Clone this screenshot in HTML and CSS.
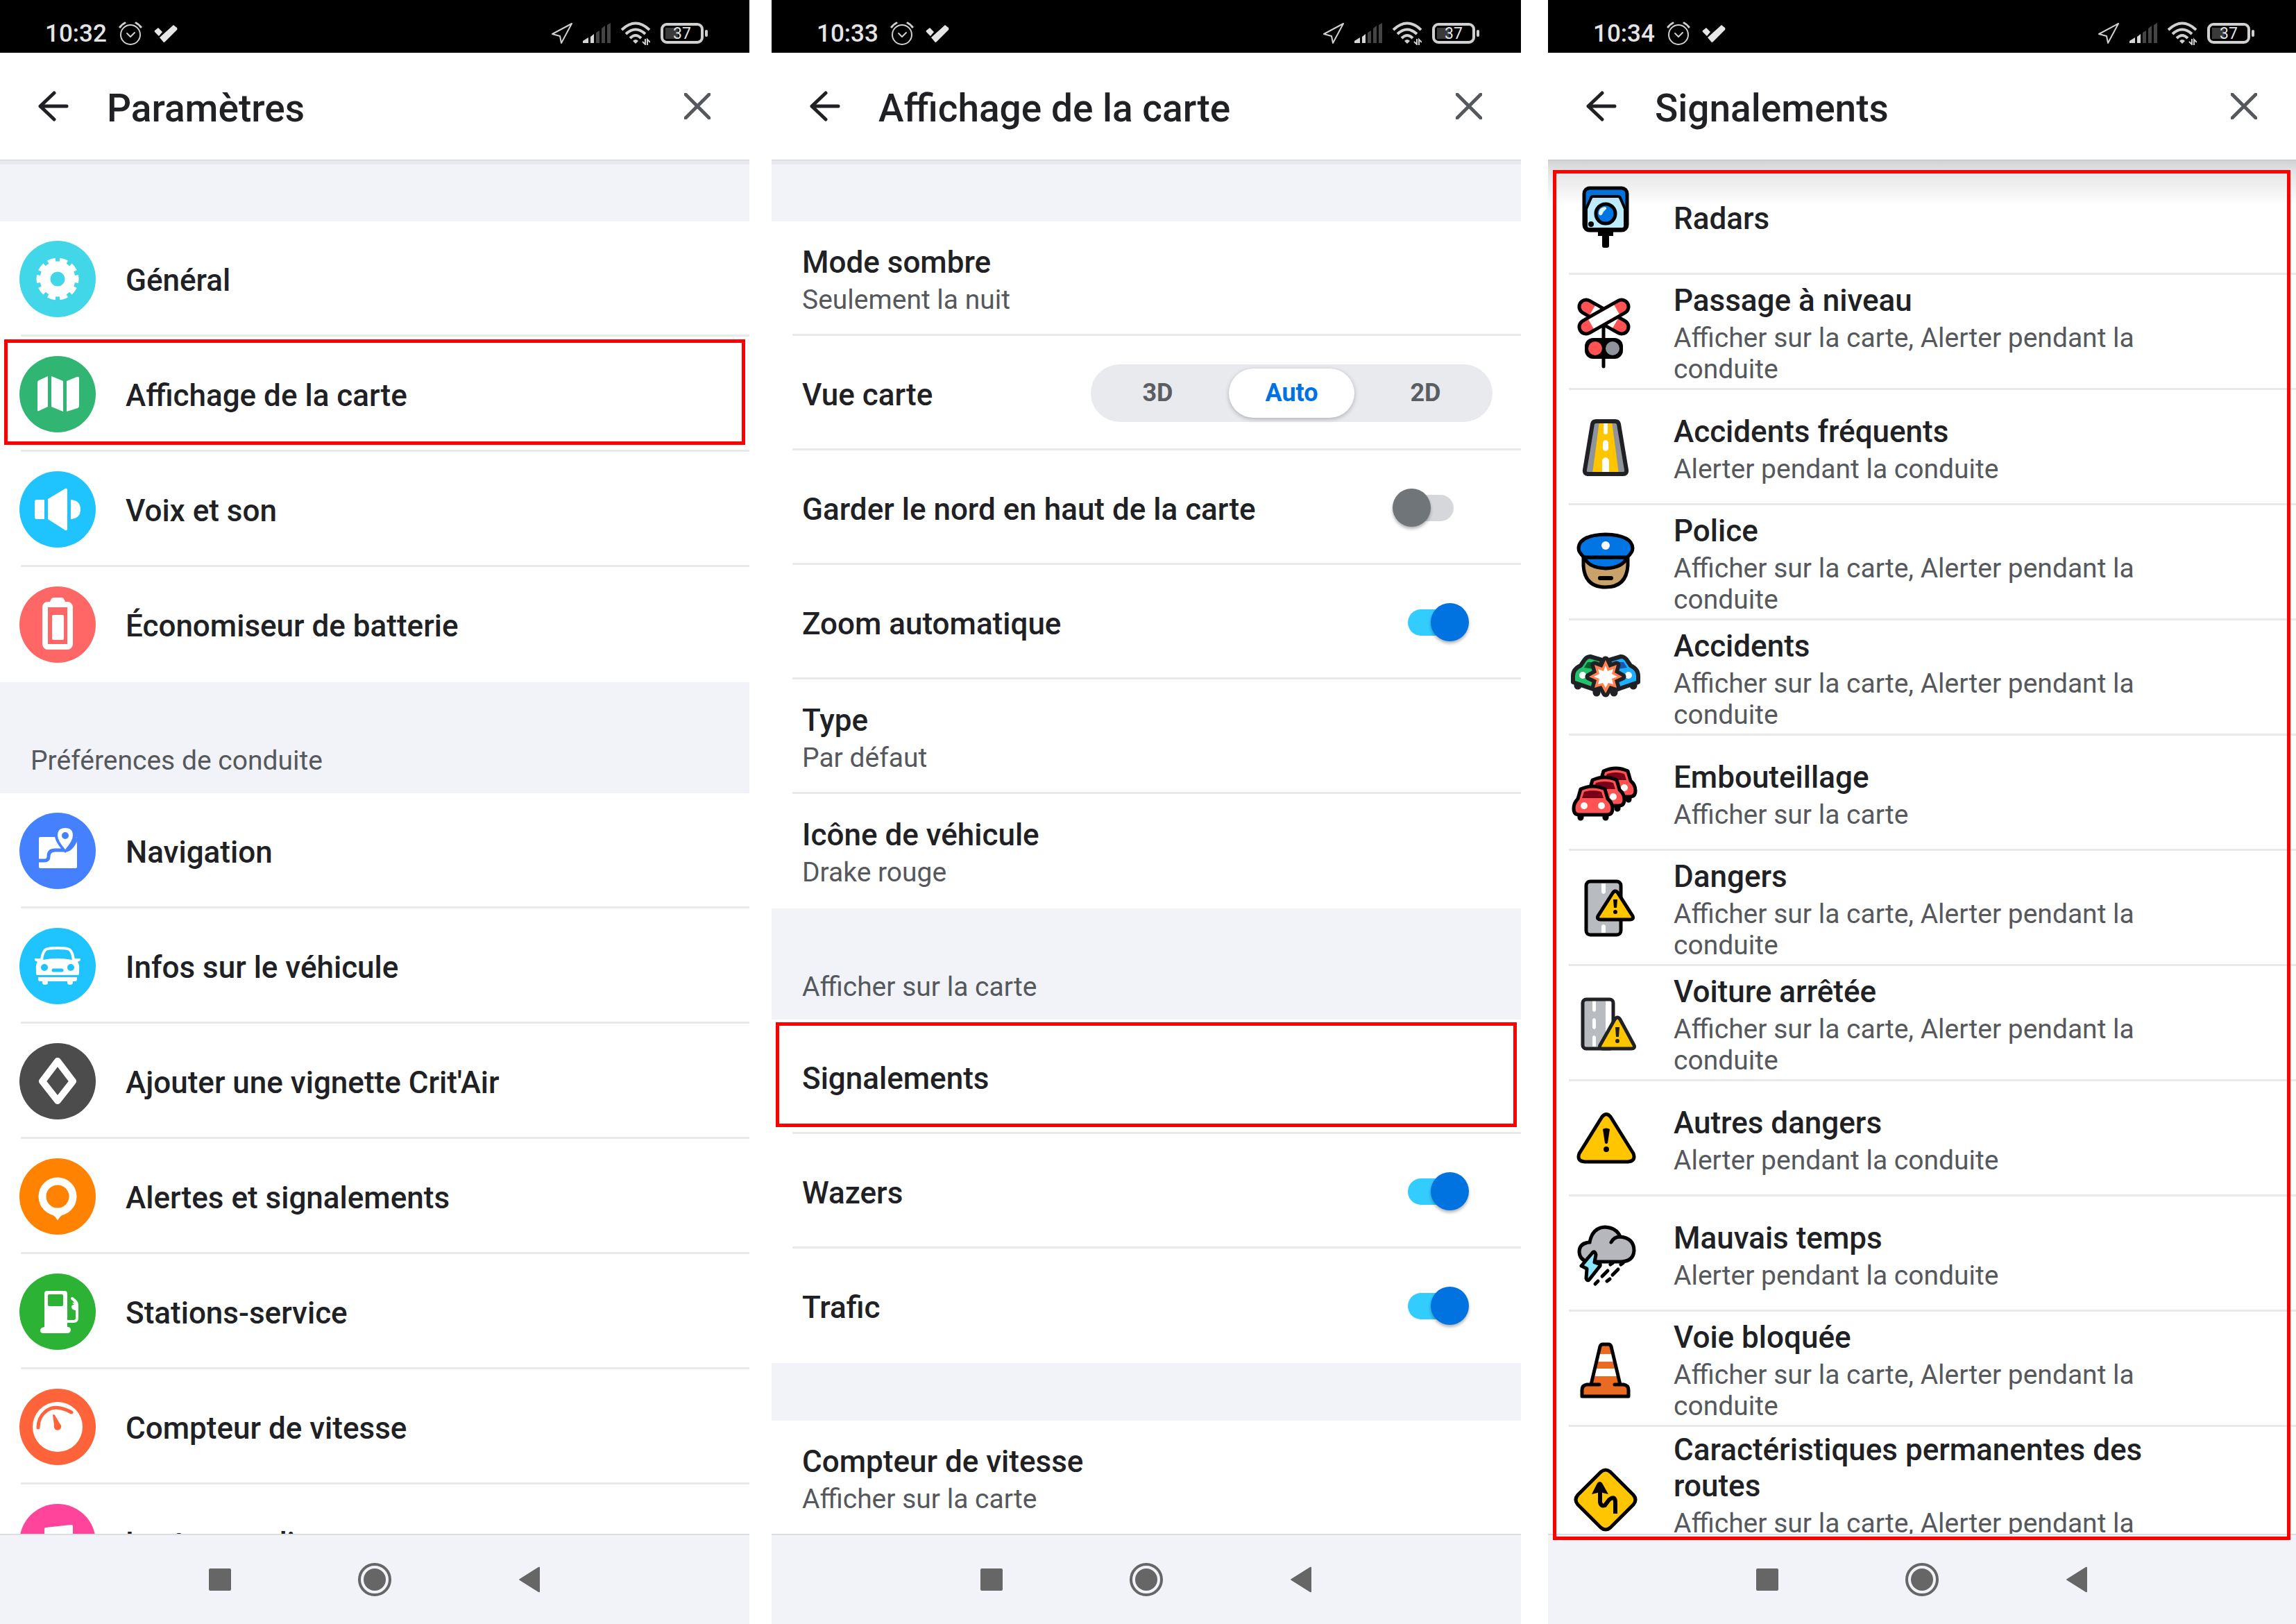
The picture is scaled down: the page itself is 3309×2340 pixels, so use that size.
FILE: index.html
```html
<!DOCTYPE html>
<html lang="fr">
<head>
    <meta charset="UTF-8">
    <meta name="viewport" content="width=device-width, initial-scale=1.0">
    <title>Paramètres des signalements</title>
    <link rel="stylesheet" href="styles.css">
</head>
<body>
    <!-- shared icons -->
    <svg class="sprite" aria-hidden="true">
        <symbol id="alarm" viewBox="0 0 34 34">
            <g fill="none" stroke="#d0d0d0" stroke-width="2" stroke-linecap="round" stroke-linejoin="round">
                <circle cx="17" cy="19" r="14"/>
                <path d="M12 17l5 5 6-6"/>
                <path d="M2 8q3-4 7-6M25 2q4 2 7 6" stroke-width="3"/>
            </g>
        </symbol>
        <symbol id="check" viewBox="0 0 34 34">
            <path d="M6 9l6 6-5 6-6-6q-1-1 0-2zM28 5l5 4q1 2 0 3L16 29q-2 2-3 0l-5-6z" fill="#e6e6e6"/>
        </symbol>
        <symbol id="location" viewBox="0 0 31 34">
            <path d="M30 3L2 18l11 3 2 10z" fill="none" stroke="#d0d0d0" stroke-width="2" stroke-linejoin="round"/>
        </symbol>
        <symbol id="signal" viewBox="0 0 40 34">
            <path d="M0 31v-3l8-5v8zM11 31v-9l5-4v13z" fill="#d6d6d6"/>
            <path d="M19 31V16l5-3v18zM27 31V10l5-4v25zM35 31V5l5-3v29z" fill="#444"/>
        </symbol>
        <symbol id="wifi" viewBox="0 0 42 34">
            <g fill="none" stroke="#d0d0d0" stroke-width="4">
                <path d="M1 12q20-19 40 0M7 18q14-13 28 0M13 24q8-8 16 0"/>
            </g>
            <path d="M17 28q4-4 8 0l-4 4z" fill="#d0d0d0"/>
            <path d="M35 25v8l-4-4M38 34v-8l4 4" fill="none" stroke="#d0d0d0" stroke-width="2"/>
        </symbol>
        <symbol id="back" viewBox="0 0 44 44">
            <path d="M23 3L3 22l20 19M3 22h38" fill="none" stroke="#202124" stroke-width="5" stroke-linecap="round" stroke-linejoin="round"/>
        </symbol>
        <symbol id="close" viewBox="0 0 38 38">
            <path d="M2 2l34 34M36 2L2 36" fill="none" stroke="#55585c" stroke-width="5" stroke-linecap="round"/>
        </symbol>
        <symbol id="nav-square" viewBox="0 0 50 50"><rect x="9" y="9" width="32" height="32" rx="2" fill="#666"/></symbol>
        <symbol id="nav-circle" viewBox="0 0 50 50">
            <circle cx="25" cy="25" r="16" fill="#666"/>
            <circle cx="25" cy="25" r="22" fill="none" stroke="#666" stroke-width="4"/>
        </symbol>
        <symbol id="nav-back" viewBox="0 0 50 50"><path d="M40 8v34q0 2-2 1L11 26q-2-1 0-2L38 7q2-1 2 1z" fill="#666"/></symbol>
        <symbol id="red-car" viewBox="0 0 60 60" overflow="visible">
            <path d="M14 42v7M50 42v7" stroke="#000" stroke-width="9" stroke-linecap="round"/>
            <path d="M14 8Q32 0 49 8l4 14q7 6 7 14 0 9-8 9H12q-8 0-8-9 0-8 6-14z" fill="#ff5252" stroke="#000" stroke-width="5" stroke-linejoin="round"/>
            <path d="M19 12q13-4 25 0l3 9H16z" fill="#7a0019"/>
            <circle cx="19" cy="32" r="5" fill="#fff"/>
            <circle cx="44" cy="32" r="5" fill="#fff"/>
        </symbol>
    </svg>

    <main class="screens">
        <section class="phone">
            <div class="status-bar">
                <time>10:32</time>
                <svg width="34" height="34"><use href="#alarm"/></svg>
                <svg width="34" height="34"><use href="#check"/></svg>
                <div class="status-right">
                    <svg width="31" height="34"><use href="#location"/></svg>
                    <svg width="40" height="34"><use href="#signal"/></svg>
                    <svg width="42" height="34"><use href="#wifi"/></svg>
                    <span class="battery"><span>37</span></span>
                </div>
            </div>
            <header class="top-bar">
                <button type="button" aria-label="Retour"><svg width="44" height="44"><use href="#back"/></svg></button>
                <h1>Paramètres</h1>
                <button type="button" aria-label="Fermer"><svg width="38" height="38"><use href="#close"/></svg></button>
            </header>
            <div class="content">
                <div class="scroll">
                    <div class="section-gap first"></div>
                    <ul class="list">
                        <li class="row">
                            <span class="icon cyan"><svg viewBox="0 0 110 110">
                                <circle cx="55" cy="55" r="18" fill="none" stroke="#fff" stroke-width="15"/>
                                <circle cx="55" cy="55" r="27" fill="none" stroke="#fff" stroke-width="7" pathLength="100" stroke-dasharray="6.4 3.6" stroke-dashoffset="3.2"/>
                            </svg></span>
                            <a href="#">Général</a>
                        </li>
                        <li class="row marked">
                            <span class="icon green"><svg viewBox="0 0 110 110">
                                <path d="M26 38q0-2 2-3l13-6v44l-13 6q-2 1-2-1zM46 29l17 7v44l-17-7zM68 36l15-6q3-1 3 2v40q0 2-2 3l-16 5z" fill="#fff"/>
                            </svg></span>
                            <a href="#">Affichage de la carte</a>
                        </li>
                        <li class="row">
                            <span class="icon sky"><svg viewBox="0 0 110 110">
                                <path d="M25 41h11v28H25q-3 0-3-3V44q0-3 3-3zM41 40l25-15q3-1 3 2v56q0 3-3 2L41 69zM74 41q14 1 14 14T74 69z" fill="#fff"/>
                            </svg></span>
                            <a href="#">Voix et son</a>
                        </li>
                        <li class="row">
                            <span class="icon coral"><svg viewBox="0 0 110 110">
                                <path d="M44 22q2-6 5-6h12q3 0 5 6z" fill="#fff"/>
                                <rect x="37" y="26" width="36" height="61" rx="4" fill="none" stroke="#fff" stroke-width="8"/>
                                <rect x="47" y="41" width="17" height="36" rx="2" fill="#fff"/>
                            </svg></span>
                            <a href="#">Économiseur de batterie</a>
                        </li>
                    </ul>
                    <h2 class="section-title">Préférences de conduite</h2>
                    <ul class="list">
                        <li class="row">
                            <span class="icon blue"><svg viewBox="0 0 110 110">
                                <rect x="28" y="35" width="55" height="45" rx="2" fill="#fff"/>
                                <path d="M66 58Q50 42 51 31q2-12 15-12t16 12q0 12-16 27z" fill="#4480ff"/>
                                <path d="M83 35L83 22H70z" fill="#4480ff"/>
                                <path d="M26 69h10q6 0 6-6 0-9 9-9h16q8 0 16-18" fill="none" stroke="#4480ff" stroke-width="5"/>
                                <path d="M66 53Q55 40 55 33q0-11 11-11t11 11q0 7-11 20z" fill="#fff"/>
                                <circle cx="66" cy="33" r="5" fill="#4480ff"/>
                            </svg></span>
                            <a href="#">Navigation</a>
                        </li>
                        <li class="row">
                            <span class="icon sky"><svg viewBox="0 0 110 110">
                                <path d="M32 47q1-11 5-15 2-3 18-3t18 3q4 4 5 15" fill="none" stroke="#fff" stroke-width="4"/>
                                <path d="M22 44h8l4 2q20-4 42 0l4-2h8v3l-4 2q3 4 2 12v5q0 2-2 2H26q-2 0-2-2v-5q-1-8 2-12l-4-2zM27 71h56v3q0 3-3 3H30q-3 0-3-3zM33 77h8v3q-1 2-4 2t-4-2zM69 77h8v3q-1 2-4 2t-4-2z" fill="#fff"/>
                                <circle cx="36" cy="57" r="5" fill="#1fc4ff"/>
                                <circle cx="74" cy="57" r="5" fill="#1fc4ff"/>
                                <path d="M49 61h12" stroke="#1fc4ff" stroke-width="5" stroke-linecap="round"/>
                            </svg></span>
                            <a href="#">Infos sur le véhicule</a>
                        </li>
                        <li class="row">
                            <span class="icon dark"><svg viewBox="0 0 110 110">
                                <path d="M55 26l22 29-22 28-22-28z" fill="none" stroke="#fff" stroke-width="10" stroke-linejoin="round"/>
                            </svg></span>
                            <a href="#">Ajouter une vignette Crit'Air</a>
                        </li>
                        <li class="row">
                            <span class="icon orange"><svg viewBox="0 0 110 110">
                                <circle cx="55" cy="55" r="22" fill="none" stroke="#fff" stroke-width="11"/>
                                <path d="M44 80q7 2 10 8 1 2 2 0 3-6 10-8z" fill="#fff"/>
                            </svg></span>
                            <a href="#">Alertes et signalements</a>
                        </li>
                        <li class="row">
                            <span class="icon leaf"><svg viewBox="0 0 110 110">
                                <path d="M40 25h25q4 0 4 4v48q5 0 5 4t-4 5H34q-4 0-4-4t6-5V29q0-4 4-4z" fill="#fff"/>
                                <rect x="41" y="30" width="22" height="17" rx="2" fill="#2cb234"/>
                                <path d="M69 69h9q5 0 5-5V45q0-4-7-9" fill="none" stroke="#fff" stroke-width="4" stroke-linecap="round"/>
                                <path d="M76 42l7-1v12q-8 0-8-5 0-3 4-3z" fill="#fff"/>
                            </svg></span>
                            <a href="#">Stations-service</a>
                        </li>
                        <li class="row">
                            <span class="icon tomato"><svg viewBox="0 0 110 110">
                                <circle cx="55" cy="55" r="36" fill="#fff"/>
                                <path d="M27 56Q27 40 40 31t35 3" fill="none" stroke="#ff6339" stroke-width="5" stroke-linecap="round"/>
                                <path d="M48 38q1-2 3 0l7 12q4 4 1 8-3 3-7 1-3-3-2-7z" fill="#ff6339"/>
                            </svg></span>
                            <a href="#">Compteur de vitesse</a>
                        </li>
                        <li class="row">
                            <span class="icon pink"><svg viewBox="0 0 110 110">
                                <path d="M36 36q0-2 2-2l37-4q2 0 2 2v40H66V48l-19 2v30H36z" fill="#fff"/>
                            </svg></span>
                            <a href="#">Lecteur audio</a>
                        </li>
                    </ul>
                </div>
            </div>
            <nav class="nav-bar">
                <button type="button" aria-label="Applications récentes"><svg width="50" height="50"><use href="#nav-square"/></svg></button>
                <button type="button" aria-label="Accueil"><svg width="50" height="50"><use href="#nav-circle"/></svg></button>
                <button type="button" aria-label="Retour"><svg width="50" height="50"><use href="#nav-back"/></svg></button>
            </nav>
        </section>

        <section class="phone">
            <div class="status-bar">
                <time>10:33</time>
                <svg width="34" height="34"><use href="#alarm"/></svg>
                <svg width="34" height="34"><use href="#check"/></svg>
                <div class="status-right">
                    <svg width="31" height="34"><use href="#location"/></svg>
                    <svg width="40" height="34"><use href="#signal"/></svg>
                    <svg width="42" height="34"><use href="#wifi"/></svg>
                    <span class="battery"><span>37</span></span>
                </div>
            </div>
            <header class="top-bar">
                <button type="button" aria-label="Retour"><svg width="44" height="44"><use href="#back"/></svg></button>
                <h1>Affichage de la carte</h1>
                <button type="button" aria-label="Fermer"><svg width="38" height="38"><use href="#close"/></svg></button>
            </header>
            <div class="content">
                <div class="scroll">
                    <div class="section-gap first"></div>
                    <ul class="list plain">
                        <li class="row"><a href="#">Mode sombre<small>Seulement la nuit</small></a></li>
                        <li class="row">
                            <span class="text" id="vue">Vue carte</span>
                            <div class="segmented" role="radiogroup" aria-labelledby="vue">
                                <label><input type="radio" name="vue"><span>3D</span></label>
                                <label><input type="radio" name="vue" checked><span>Auto</span></label>
                                <label><input type="radio" name="vue"><span>2D</span></label>
                            </div>
                        </li>
                        <li class="row">
                            <label class="text" for="nord">Garder le nord en haut de la carte</label>
                            <input class="switch" type="checkbox" id="nord">
                        </li>
                        <li class="row">
                            <label class="text" for="zoom">Zoom automatique</label>
                            <input class="switch" type="checkbox" id="zoom" checked>
                        </li>
                        <li class="row"><a href="#">Type<small>Par défaut</small></a></li>
                        <li class="row"><a href="#">Icône de véhicule<small>Drake rouge</small></a></li>
                    </ul>
                    <h2 class="section-title">Afficher sur la carte</h2>
                    <ul class="list plain">
                        <li class="row marked"><a href="#">Signalements</a></li>
                        <li class="row">
                            <label class="text" for="wazers">Wazers</label>
                            <input class="switch" type="checkbox" id="wazers" checked>
                        </li>
                        <li class="row">
                            <label class="text" for="trafic">Trafic</label>
                            <input class="switch" type="checkbox" id="trafic" checked>
                        </li>
                    </ul>
                    <div class="section-gap"></div>
                    <ul class="list plain">
                        <li class="row"><a href="#">Compteur de vitesse<small>Afficher sur la carte</small></a></li>
                    </ul>
                </div>
            </div>
            <nav class="nav-bar">
                <button type="button" aria-label="Applications récentes"><svg width="50" height="50"><use href="#nav-square"/></svg></button>
                <button type="button" aria-label="Accueil"><svg width="50" height="50"><use href="#nav-circle"/></svg></button>
                <button type="button" aria-label="Retour"><svg width="50" height="50"><use href="#nav-back"/></svg></button>
            </nav>
        </section>

        <section class="phone">
            <div class="status-bar">
                <time>10:34</time>
                <svg width="34" height="34"><use href="#alarm"/></svg>
                <svg width="34" height="34"><use href="#check"/></svg>
                <div class="status-right">
                    <svg width="31" height="34"><use href="#location"/></svg>
                    <svg width="40" height="34"><use href="#signal"/></svg>
                    <svg width="42" height="34"><use href="#wifi"/></svg>
                    <span class="battery"><span>37</span></span>
                </div>
            </div>
            <header class="top-bar">
                <button type="button" aria-label="Retour"><svg width="44" height="44"><use href="#back"/></svg></button>
                <h1>Signalements</h1>
                <button type="button" aria-label="Fermer"><svg width="38" height="38"><use href="#close"/></svg></button>
            </header>
            <div class="content scrolled framed">
                <div class="scroll">
                    <ul class="list reports">
                        <li class="row">
                            <span class="icon"><svg viewBox="0 0 110 110">
                                <path d="M44 74h22v8h-6v14q0 3-3 3h-4q-3 0-3-3V82h-6z"/>
                                <rect x="24" y="13" width="62" height="61" rx="8" fill="#0075e3" stroke="#000" stroke-width="5"/>
                                <path d="M27 43l7-16q1-2 3-2h36q2 0 3 2l7 16v25q0 4-4 4H31q-4 0-4-4z" fill="#bfebff" stroke="#000" stroke-width="4"/>
                                <circle cx="55" cy="50" r="14" fill="#0075e3" stroke="#000" stroke-width="5"/>
                                <path d="M45 50q0-9 9-10 4 1 1 4-4 3-5 7-3 3-5-1z" fill="#dff5ff"/>
                                <circle cx="34" cy="65" r="4"/>
                            </svg></span>
                            <a href="#">Radars</a>
                        </li>
                        <li class="row">
                            <span class="icon"><svg viewBox="0 0 110 110">
                                <path d="M52 40v64" stroke="#000" stroke-width="5" stroke-linecap="round"/>
                                <g stroke-linecap="round">
                                    <path d="M27 18l51 29" stroke="#000" stroke-width="25"/>
                                    <path d="M27 18l51 29" stroke="#ff5252" stroke-width="15"/>
                                    <path d="M36 23l33 19" stroke="#fff" stroke-width="15" stroke-linecap="butt"/>
                                    <path d="M27 47l51-29" stroke="#000" stroke-width="25"/>
                                    <path d="M27 47l51-29" stroke="#ff5252" stroke-width="15"/>
                                    <path d="M34 43l37-21" stroke="#fff" stroke-width="15" stroke-linecap="butt"/>
                                </g>
                                <rect x="25" y="63" width="55" height="30" rx="12"/>
                                <circle cx="40" cy="78" r="10" fill="#ff5252"/>
                                <circle cx="65" cy="78" r="10" fill="#8f949b"/>
                                <path d="M52 63v30" stroke="#000" stroke-width="4"/>
                            </svg></span>
                            <a href="#">Passage à niveau<small>Afficher sur la carte, Alerter pendant la conduite</small></a>
                        </li>
                        <li class="row">
                            <span class="icon"><svg viewBox="0 0 110 110">
                                <path d="M41 17h28q4 0 5 4l11 66q1 6-5 6H30q-6 0-5-6l11-66q1-4 5-4z" fill="#8f949b"/>
                                <path d="M46 17h18l10 76H36z" fill="#ffc600"/>
                                <path d="M52 17h6v17q-3 4-6 0zM51 47q4-6 8 0v10q-4 6-8 0zM50 92V73q5-8 10 0v19z" fill="#fff"/>
                                <path d="M41 17h28q4 0 5 4l11 66q1 6-5 6H30q-6 0-5-6l11-66q1-4 5-4z" fill="none" stroke="#202124" stroke-width="6"/>
                            </svg></span>
                            <a href="#">Accidents fréquents<small>Alerter pendant la conduite</small></a>
                        </li>
                        <li class="row">
                            <span class="icon"><svg viewBox="0 0 110 110">
                                <path d="M23 46v13q2 31 32 31t32-31V46z" fill="#c9a16b" stroke="#000" stroke-width="5"/>
                                <path d="M24 47h62q-6 15-31 16-25-1-31-16z" fill="#0075e3" stroke="#000" stroke-width="5"/>
                                <path d="M24 47Q16 40 16 34q1-19 39-20 38 1 39 20 0 6-8 13z" fill="#0075e3" stroke="#000" stroke-width="5" stroke-linejoin="round"/>
                                <circle cx="55" cy="30" r="6" fill="#fff"/>
                                <path d="M47 77h16" stroke="#000" stroke-width="6" stroke-linecap="round"/>
                            </svg></span>
                            <a href="#">Police<small>Afficher sur la carte, Alerter pendant la conduite</small></a>
                        </li>
                        <li class="row">
                            <span class="icon"><svg viewBox="0 0 110 110">
                                <g stroke="#202124" stroke-linecap="round" stroke-width="11">
                                    <path d="M15 62v4M42 72v4M95 62v4M67 72v4"/>
                                </g>
                                <path d="M50 29l-17-5q-6 0-10 7l-4 6Q8 42 8 52v9l32 11z" fill="#24c26c" stroke="#202124" stroke-width="6" stroke-linejoin="round"/>
                                <path d="M60 29l17-5q6 0 10 7l4 6q11 5 11 15v9L70 72z" fill="#1daeff" stroke="#202124" stroke-width="6" stroke-linejoin="round"/>
                                <path d="M29 32h9v10l-14-2z" fill="#00602d"/>
                                <path d="M81 32h-9v10l14-2z" fill="#1a55ad"/>
                                <circle cx="22" cy="51" r="5" fill="#fff"/>
                                <circle cx="88" cy="51" r="5" fill="#fff"/>
                                <path d="M55 29l5 11 11-4-3 11 11 6-11 5 3 11-10-3-6 11-6-11-10 3 3-11-11-5 11-6-3-11 11 4z" fill="#ff8250" stroke="#202124" stroke-width="11" stroke-linejoin="round"/>
                                <path d="M55 29l5 11 11-4-3 11 11 6-11 5 3 11-10-3-6 11-6-11-10 3 3-11-11-5 11-6-3-11 11 4z" fill="#ff8250"/>
                                <path d="M55 37l3 8 8-3-2 7 8 4-8 3 2 8-7-2-4 7-4-7-7 2 2-8-8-3 8-4-2-7 8 3z" fill="#fff"/>
                            </svg></span>
                            <a href="#">Accidents<small>Afficher sur la carte, Alerter pendant la conduite</small></a>
                        </li>
                        <li class="row">
                            <span class="icon"><svg viewBox="0 0 110 110">
                                <use href="#red-car" x="38" y="15" width="60" height="60"/>
                                <use href="#red-car" x="22" y="28" width="60" height="60"/>
                                <use href="#red-car" x="5" y="41" width="60" height="60"/>
                            </svg></span>
                            <a href="#">Embouteillage<small>Afficher sur la carte</small></a>
                        </li>
                        <li class="row">
                            <span class="icon"><svg viewBox="0 0 110 110">
                                <rect x="27" y="16" width="50" height="77" rx="6" fill="#b8bbbf" stroke="#000" stroke-width="5"/>
                                <path d="M49 19h6v13q-3 4-6 0zM49 90V80q3-4 6 0v10z" fill="#fff"/>
                                <path d="M65 33q4-6 8 0l21 33q2 5-4 5H48q-6 0-4-5z" fill="#ffc600" stroke="#000" stroke-width="5"/>
                                <path d="M66 42h6l-1 12h-4z"/>
                                <circle cx="69" cy="60" r="3"/>
                            </svg></span>
                            <a href="#">Dangers<small>Afficher sur la carte, Alerter pendant la conduite</small></a>
                        </li>
                        <li class="row">
                            <span class="icon"><svg viewBox="0 0 110 110">
                                <rect x="22" y="20" width="44" height="71" rx="5" fill="#b8bbbf"/>
                                <path d="M55 20h9v50h-9zM36 20h5v16q-2 4-5 0zM36 49q2-4 5 0v12q-2 4-5 0zM36 88V74q2-4 5 0v14z" fill="#fff"/>
                                <rect x="22" y="20" width="44" height="71" rx="5" fill="none" stroke="#202124" stroke-width="5"/>
                                <path d="M68 49q4-6 8 0l20 37q2 5-4 5H51q-6 0-4-5z" fill="#ffc600" stroke="#202124" stroke-width="5"/>
                                <path d="M69 60h6l-1 14h-4z" fill="#202124"/>
                                <circle cx="72" cy="80" r="3" fill="#202124"/>
                            </svg></span>
                            <a href="#">Voiture arrêtée<small>Afficher sur la carte, Alerter pendant la conduite</small></a>
                        </li>
                        <li class="row">
                            <span class="icon"><svg viewBox="0 0 110 110">
                                <path d="M50 23q6-7 12 0l33 53q4 11-8 12H25q-12-1-8-12z" fill="#ffc600" stroke="#000" stroke-width="5"/>
                                <path d="M51 41q5-3 10 0l-3 20q-2 2-4 0z"/>
                                <circle cx="56" cy="70" r="4"/>
                            </svg></span>
                            <a href="#">Autres dangers<small>Alerter pendant la conduite</small></a>
                        </li>
                        <li class="row">
                            <span class="icon"><svg viewBox="0 0 110 110">
                                <path d="M32 38q4-21 22-22 17 1 22 14 20 2 20 20-1 16-20 16H32Q18 65 17 52q0-13 15-14z" fill="#b5b7bc" stroke="#000" stroke-width="5"/>
                                <path d="M76 30q-9 0-13 8" fill="none" stroke="#000" stroke-width="5" stroke-linecap="round"/>
                                <path d="M37 52L20 72l8 4-1 14q2 5 5 1l15-19q1-3-2-3l-6-2 2-11q-1-5-4-4z" fill="#8de6ff" stroke="#000" stroke-width="5" stroke-linejoin="round"/>
                                <path d="M50 87l8-8M40 98l4-4M65 85l8-8M57 94l4-3M62 70l3-2M77 70l3-2" fill="none" stroke="#000" stroke-width="5" stroke-linecap="round"/>
                            </svg></span>
                            <a href="#">Mauvais temps<small>Alerter pendant la conduite</small></a>
                        </li>
                        <li class="row">
                            <span class="icon"><svg viewBox="0 0 110 110">
                                <path d="M34 77l13-55q1-3 4-3h8q3 0 4 3l13 55h5q7 1 7 8v8H21v-8q0-7 7-8z" fill="#e96a20"/>
                                <path d="M45 33h20l3 11H42zM40 54h30l3 11H37z" fill="#fff"/>
                                <path d="M46 77H28q-7 1-7 8v9h67v-9q0-7-7-8H68M34 77l13-55q1-3 4-3h8q3 0 4 3l13 55" fill="none" stroke="#000" stroke-width="5" stroke-linecap="round" stroke-linejoin="round"/>
                            </svg></span>
                            <a href="#">Voie bloquée<small>Afficher sur la carte, Alerter pendant la conduite</small></a>
                        </li>
                        <li class="row">
                            <span class="icon"><svg viewBox="0 0 110 110">
                                <path d="M48 15q7-6 14 0l33 33q6 7 0 14L62 95q-7 6-14 0L15 62q-6-7 0-14z" fill="#ffc600" stroke="#000" stroke-width="5"/>
                                <path d="M47 40v18q1 7 7 5l6-8q9-7 9 4v16" fill="none" stroke="#000" stroke-width="6"/>
                                <path d="M43 31q4-4 7 0l9 16-12-3-12 3z"/>
                            </svg></span>
                            <a href="#">Caractéristiques permanentes des routes<small>Afficher sur la carte, Alerter pendant la conduite</small></a>
                        </li>
                    </ul>
                </div>
            </div>
            <nav class="nav-bar">
                <button type="button" aria-label="Applications récentes"><svg width="50" height="50"><use href="#nav-square"/></svg></button>
                <button type="button" aria-label="Accueil"><svg width="50" height="50"><use href="#nav-circle"/></svg></button>
                <button type="button" aria-label="Retour"><svg width="50" height="50"><use href="#nav-back"/></svg></button>
            </nav>
        </section>
    </main>
</body>
</html>
```

FILE: styles.css
```css
* {
    box-sizing: border-box;
}
body {
    margin: 0;
    font-family: Roboto, "Liberation Sans", sans-serif;
    color: #202124;
    background: white;
}
.sprite {
    position: absolute;
    width: 0;
    height: 0;
}
svg {
    display: block;
    flex-shrink: 0;
}
button {
    display: flex;
    align-items: center;
    justify-content: center;
    padding: 0;
    background: none;
    border: none;
    cursor: pointer;
}
.screens {
    display: grid;
    grid-template-columns: 1080fr 1080fr 1085fr;
    gap: 32px;
    height: 100vh;
}
.phone {
    display: flex;
    flex-direction: column;
    min-width: 0;
    min-height: 0;
}
.phone:last-child {
    margin-left: 7px;
}

/* status bar */
.status-bar {
    display: flex;
    align-items: center;
    gap: 17px;
    height: 76px;
    padding: 20px 60px 0 65px;
    background: black;
    color: #e4e4e4;
    flex-shrink: 0;
}
.status-bar time {
    font-size: 35px;
    font-weight: 500;
}
.status-right {
    display: flex;
    align-items: center;
    gap: 15px;
    margin-left: auto;
}
.battery {
    position: relative;
    width: 62px;
    height: 30px;
    margin-right: 6px;
    border: 4px solid #d0d0d0;
    border-radius: 9px;
    background: linear-gradient(#3a3a3a, #3a3a3a) 3px 3px / 18px 16px no-repeat;
    font-size: 23px;
    line-height: 24px;
    text-align: center;
}
.battery::after {
    content: "";
    position: absolute;
    top: 6px;
    right: -10px;
    width: 4px;
    height: 10px;
    border-radius: 2px;
    background: #d0d0d0;
}

/* title bar */
.top-bar {
    display: flex;
    align-items: center;
    height: 154px;
    padding: 0 56px 0 55px;
    flex-shrink: 0;
}
.top-bar h1 {
    flex: 1;
    margin: 0;
    padding: 5px 0 0 55px;
    font-size: 55px;
    font-weight: 500;
    line-height: 64px;
}

/* scrolling content */
.content {
    position: relative;
    display: flex;
    flex: 1;
    min-height: 0;
}
.content::before {
    content: "";
    position: absolute;
    inset: 0 0 auto;
    height: 6px;
    border-top: 1px solid #d3d7d7;
    background: #e6e8eb;
}
.content.scrolled::before {
    height: 65px;
    border-top-color: #bfc2c4;
    background: linear-gradient(rgba(60, 64, 72, 0.24), rgba(60, 64, 72, 0.14) 25%, rgba(60, 64, 72, 0));
    z-index: 1;
}
.content.framed::after {
    content: "";
    position: absolute;
    inset: 15px 8px -9px 7px;
    border: 5px solid #ff0000;
    z-index: 2;
    pointer-events: none;
}
.scroll {
    flex: 1;
    min-width: 0;
    overflow: hidden;
}
.section-gap {
    height: 83px;
    background: #f2f3f8;
}
.section-gap.first {
    height: 89px;
}
.section-title {
    display: flex;
    align-items: flex-end;
    height: 160px;
    margin: 0;
    padding: 0 44px 24px;
    background: #f2f3f8;
    color: #55585c;
    font-size: 39px;
    font-weight: 400;
    line-height: 45px;
}
.content::before {
    z-index: 1;
}

/* lists */
.list {
    margin: 0;
    padding: 0;
    list-style: none;
}
.row {
    position: relative;
    display: flex;
    align-items: center;
    gap: 43px;
    min-height: 166px;
    padding-left: 28px;
    background: linear-gradient(#e8e9eb, #e8e9eb) 30px 100% / 100% 3px no-repeat;
}
.row:last-child {
    background: none;
}
.row.marked::after {
    content: "";
    position: absolute;
    inset: 4px 6px 10px;
    border: 5px solid #ff0000;
    pointer-events: none;
}
.row a,
.row .text {
    flex: 1;
    padding: 7px 0 3px;
    color: inherit;
    font-size: 44px;
    font-weight: 500;
    line-height: 52px;
    text-decoration: none;
}
.row small {
    display: block;
    margin-top: 6px;
    color: #55585c;
    font-size: 39px;
    font-weight: 400;
    line-height: 45px;
}
.plain .row {
    min-height: 165px;
    padding-left: 44px;
}
.reports .row a {
    padding-right: 120px;
}

/* round icons */
.icon {
    width: 110px;
    height: 110px;
    border-radius: 50%;
    flex-shrink: 0;
}
.cyan { background: #42d7e8; }
.green { background: #30b672; }
.sky { background: #1fc4ff; }
.coral { background: #ff6666; }
.blue { background: #4480ff; }
.dark { background: #4c4c4c; }
.orange { background: #ff8300; }
.leaf { background: #2cb234; }
.tomato { background: #ff6339; }
.pink { background: #ff459b; }

/* 3D / Auto / 2D selector */
.segmented {
    display: grid;
    grid-template-columns: repeat(3, 193px);
    height: 83px;
    margin-right: 41px;
    border-radius: 42px;
    background: #e8eaed;
}
.segmented label {
    display: flex;
    padding: 6px;
    cursor: pointer;
}
.segmented input {
    position: absolute;
    opacity: 0;
}
.segmented span {
    flex: 1;
    border-radius: 36px;
    color: #5a5d61;
    font-size: 36px;
    font-weight: 700;
    line-height: 71px;
    text-align: center;
}
.segmented input:checked + span {
    background: white;
    color: #0073e0;
    box-shadow: 0 2px 6px rgba(0, 0, 0, 0.25);
}

/* switches */
.switch {
    display: grid;
    align-items: center;
    width: 110px;
    height: 55px;
    margin: 0 75px 0 0;
    appearance: none;
    cursor: pointer;
}
.switch::before,
.switch::after {
    content: "";
    grid-area: 1 / 1;
}
.switch::before {
    width: 66px;
    height: 38px;
    justify-self: center;
    border-radius: 19px;
    background: #d5d7db;
}
.switch::after {
    width: 55px;
    height: 55px;
    border-radius: 50%;
    background: #70757a;
    box-shadow: 0 3px 4px rgba(0, 0, 0, 0.3);
}
.switch:checked::before {
    background: #33ccff;
}
.switch:checked::after {
    justify-self: end;
    background: #0073e0;
}

/* android buttons */
.nav-bar {
    display: flex;
    justify-content: center;
    height: 130px;
    border-top: 2px solid #dcdde0;
    background: #f2f3f8;
    flex-shrink: 0;
}
.nav-bar button {
    width: 223px;
}
```
